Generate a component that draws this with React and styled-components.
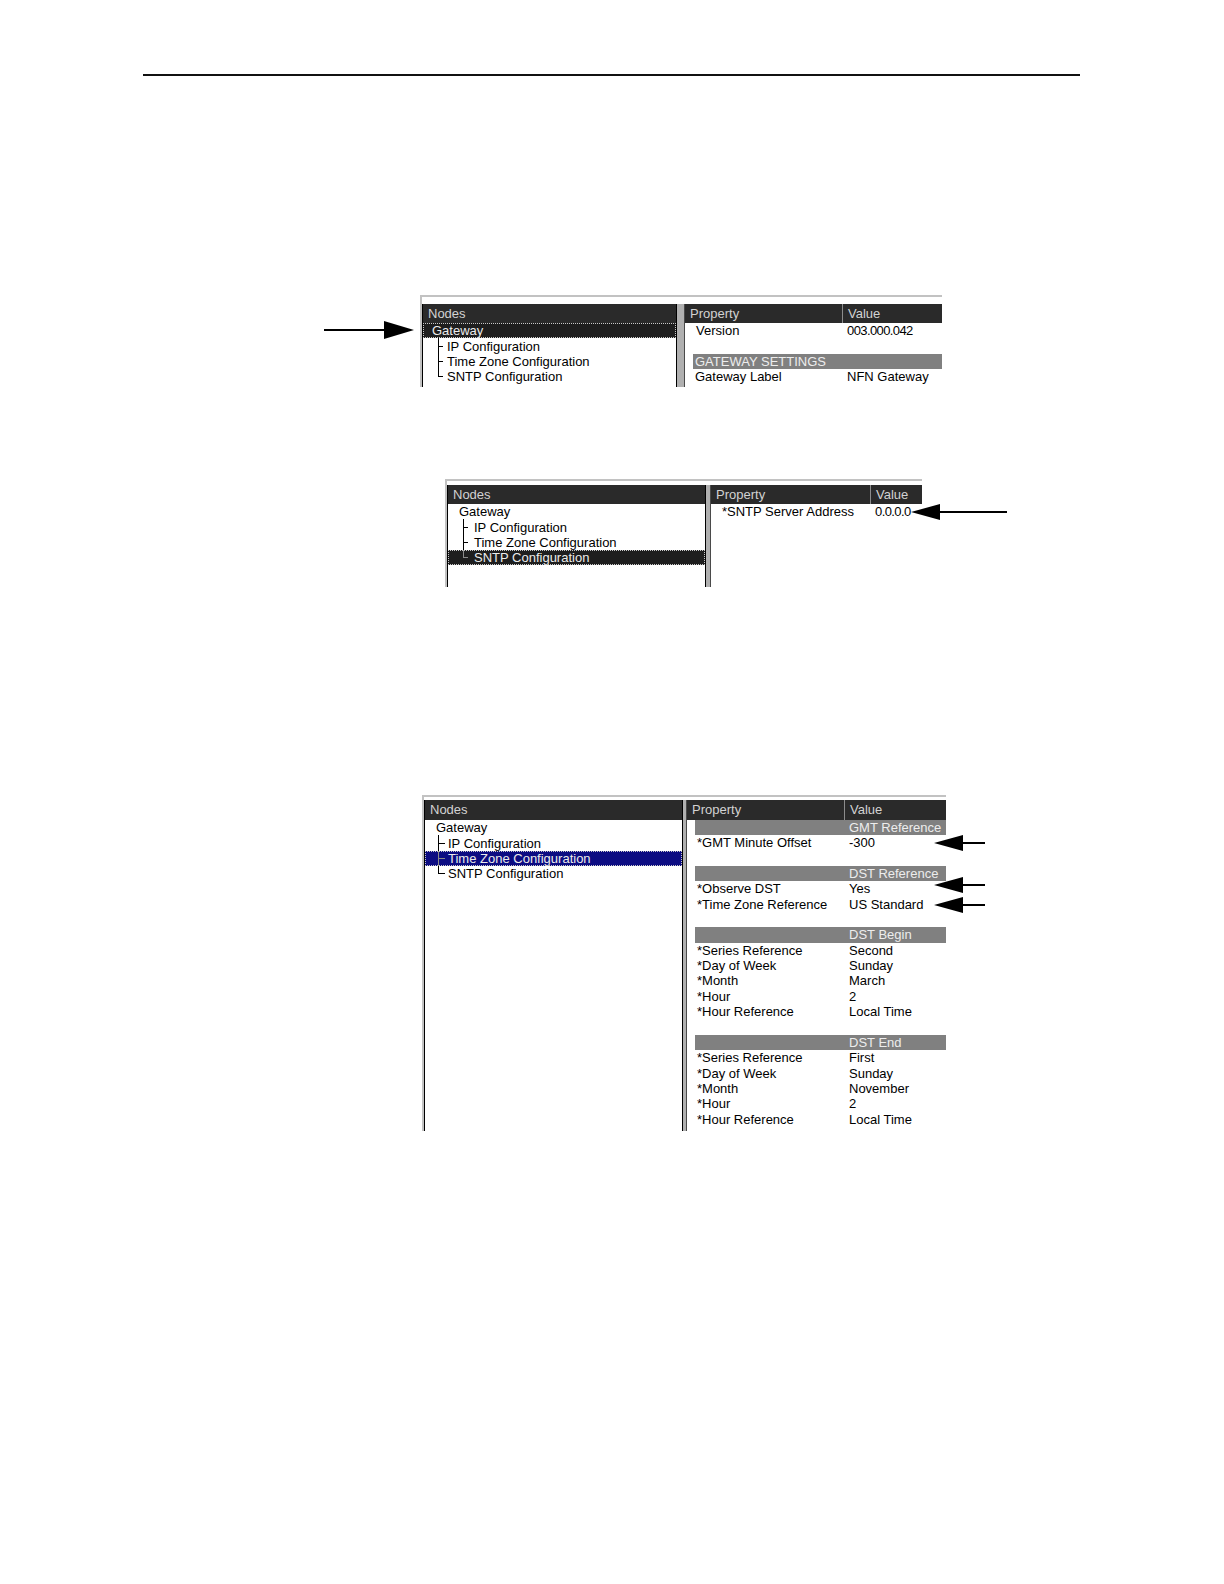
import React from 'react';
import styled, { createGlobalStyle } from 'styled-components';

const ROW = 15.35;

const GlobalStyle = createGlobalStyle`
  html, body {
    margin: 0;
    padding: 0;
    background: #fff;
  }
  body {
    font-family: "Liberation Sans", Arial, sans-serif;
  }
`;

const Page = styled.div`
  width: 1224px;
  height: 1584px;
  box-sizing: border-box;
  padding-top: 74px;
  background: #fff;
  overflow: hidden;
`;

const Rule = styled.div`
  margin-left: 143px;
  width: 937px;
  height: 2px;
  background: #111;
`;

const Figure = styled.div`
  position: relative;
  width: max-content;
  margin-top: ${p => p.$top}px;
  margin-left: ${p => p.$left}px;
`;

const Window = styled.div`
  display: flex;
  height: ${p => p.$h}px;
  box-sizing: border-box;
  padding-top: ${p => p.$gap}px;
  border-top: 2px solid #c2c2c2;
  border-left: 2px solid #c2c2c2;
  background: #fff;
  overflow: hidden;
`;

const TreePane = styled.div`
  display: flex;
  flex-direction: column;
  width: ${p => p.$w}px;
  border-left: 1px solid #000;
  border-right: 1px solid #000;
  flex-shrink: 0;
`;

const Splitter = styled.div`
  width: ${p => p.$w}px;
  background: #b0b0b0;
  border-right: 1px solid #4a4a4a;
  flex-shrink: 0;
`;

const PropPane = styled.div`
  display: flex;
  flex-direction: column;
  width: ${p => p.$w}px;
  flex-shrink: 0;
`;

const Header = styled.div`
  display: flex;
  height: ${p => p.$h}px;
  flex-shrink: 0;
  background: #2a2a2a;
  color: #d2d2d2;
  font-size: 13px;
  line-height: ${p => p.$h}px;
`;

const HeadCell = styled.div`
  box-sizing: border-box;
  padding-left: 5px;
  white-space: nowrap;
  ${p => (p.$w ? `width: ${p.$w}px; border-right: 1px solid #8c8c8c;` : 'flex: 1;')}
`;

const TreeRow = styled.div`
  display: flex;
  align-items: center;
  height: ${ROW}px;
  box-sizing: border-box;
  padding-left: ${p => p.$indent}px;
  font-size: 13px;
  white-space: nowrap;
  background: ${p => p.$sel || 'transparent'};
  color: ${p => (p.$sel ? '#ececec' : '#000')};
  outline: ${p => (p.$sel ? '1px dotted #c8c8c8' : 'none')};
  outline-offset: -1px;
`;

const Branch = styled.span`
  position: relative;
  align-self: ${p => (p.$last ? 'flex-start' : 'stretch')};
  height: ${p => (p.$last ? '50%' : 'auto')};
  width: ${p => p.$stub}px;
  margin-right: ${p => p.$gap}px;
  border-left: 1px solid ${p => p.$color};
  flex-shrink: 0;

  &::after {
    content: '';
    position: absolute;
    left: 0;
    ${p => (p.$last ? 'bottom: 0;' : 'top: 50%;')}
    width: ${p => p.$stub}px;
    border-top: 1px solid ${p => p.$color};
  }
`;

const PropRow = styled.div`
  display: grid;
  grid-template-columns: ${p => p.$col}px 1fr;
  height: ${ROW}px;
  font-size: 13px;
  line-height: ${ROW}px;
  color: #000;
  white-space: nowrap;
`;

const PropName = styled.div`
  padding-left: ${p => p.$pad}px;
  overflow: hidden;
`;

const PropValue = styled.div`
  padding-left: 4px;
  overflow: hidden;
  letter-spacing: ${p => (p.$tight ? '-0.6px' : 'normal')};
`;

const Band = styled.div`
  display: grid;
  grid-template-columns: ${p => p.$col - 8}px 1fr;
  height: ${ROW}px;
  margin-left: 8px;
  background: #808080;
  color: #ededed;
  font-size: 13px;
  line-height: ${ROW}px;
  white-space: nowrap;
`;

const BandLabel = styled.div`
  grid-column: ${p => (p.$inValue ? 2 : 1)};
  padding-left: ${p => (p.$inValue ? 4 : 2)}px;
`;

const ArrowSvg = styled.svg`
  position: absolute;
  left: ${p => p.$x}px;
  top: ${p => p.$y}px;
  overflow: visible;
`;

function Arrow({ x, y, len, dir, h = 16, head = 29 }) {
  const mid = h / 2;
  return (
    <ArrowSvg $x={x} $y={y - mid} width={len} height={h} viewBox={`0 0 ${len} ${h}`}>
      {dir === 'right' ? (
        <>
          <rect x="0" y={mid - 1} width={len - head + 2} height="2" fill="#000" />
          <polygon points={`${len - head},0 ${len},${mid} ${len - head},${h}`} fill="#000" />
        </>
      ) : (
        <>
          <rect x={head - 2} y={mid - 1} width={len - head + 2} height="2" fill="#000" />
          <polygon points={`${head},0 0,${mid} ${head},${h}`} fill="#000" />
        </>
      )}
    </ArrowSvg>
  );
}

const TREE = ['Gateway', 'IP Configuration', 'Time Zone Configuration', 'SNTP Configuration'];

function Tree({ width, head, selected, selColor, rootIndent, indent, stub, gap, extra = 0 }) {
  return (
    <TreePane $w={width}>
      <Header $h={head}>
        <HeadCell>Nodes</HeadCell>
      </Header>
      {TREE.map((label, i) => {
        const sel = i === selected ? selColor : null;
        return (
          <TreeRow key={label} $indent={i === 0 ? rootIndent : indent} $sel={sel}>
            {i > 0 && (
              <Branch
                $last={i === TREE.length - 1}
                $stub={stub}
                $gap={gap}
                $color={sel ? '#8a8a8a' : '#000'}
              />
            )}
            {label}
          </TreeRow>
        );
      })}
      {Array.from({ length: extra }).map((_, i) => (
        <TreeRow key={`e${i}`} $indent={rootIndent} />
      ))}
    </TreePane>
  );
}

function Props({ width, head, col, rows, namePad = 10 }) {
  return (
    <PropPane $w={width}>
      <Header $h={head}>
        <HeadCell $w={col}>Property</HeadCell>
        <HeadCell>Value</HeadCell>
      </Header>
      {rows.map((r, i) => {
        if (r.band) {
          return (
            <Band key={i} $col={col}>
              <BandLabel $inValue={r.inValue}>{r.band}</BandLabel>
            </Band>
          );
        }
        return (
          <PropRow key={i} $col={col}>
            <PropName $pad={r.pad || namePad}>{r.name}</PropName>
            <PropValue $tight={/\d\./.test(r.value)}>{r.value}</PropValue>
          </PropRow>
        );
      })}
    </PropPane>
  );
}

const gatewayRows = [
  { name: 'Version', value: '003.000.042', pad: 11 },
  { name: '', value: '' },
  { band: 'GATEWAY SETTINGS' },
  { name: 'Gateway Label', value: 'NFN Gateway' },
];

const sntpRows = [{ name: '*SNTP Server Address', value: '0.0.0.0' }];

const timeZoneRows = [
  { band: 'GMT Reference', inValue: true },
  { name: '*GMT Minute Offset', value: '-300' },
  { name: '', value: '' },
  { band: 'DST Reference', inValue: true },
  { name: '*Observe DST', value: 'Yes' },
  { name: '*Time Zone Reference', value: 'US Standard' },
  { name: '', value: '' },
  { band: 'DST Begin', inValue: true },
  { name: '*Series Reference', value: 'Second' },
  { name: '*Day of Week', value: 'Sunday' },
  { name: '*Month', value: 'March' },
  { name: '*Hour', value: '2' },
  { name: '*Hour Reference', value: 'Local Time' },
  { name: '', value: '' },
  { band: 'DST End', inValue: true },
  { name: '*Series Reference', value: 'First' },
  { name: '*Day of Week', value: 'Sunday' },
  { name: '*Month', value: 'November' },
  { name: '*Hour', value: '2' },
  { name: '*Hour Reference', value: 'Local Time' },
];

export default function App() {
  return (
    <Page>
      <GlobalStyle />
      <Rule />

      <Figure $top={219} $left={420}>
        <Window $h={92} $gap={7}>
          <Tree
            width={253}
            head={19}
            selected={0}
            selColor="#1e1e1e"
            rootIndent={9}
            indent={15}
            stub={4}
            gap={4}
          />
          <Splitter $w={7} />
          <Props width={257} head={19} col={158} rows={gatewayRows} />
        </Window>
        <Arrow x={-96} y={35} len={90} dir="right" h={18} head={30} />
      </Figure>

      <Figure $top={92} $left={445}>
        <Window $h={108} $gap={4}>
          <Tree
            width={257}
            head={19}
            selected={3}
            selColor="#1e1e1e"
            rootIndent={11}
            indent={15}
            stub={4}
            gap={6}
            extra={1}
          />
          <Splitter $w={4} />
          <Props width={211} head={19} col={160} rows={sntpRows} namePad={11} />
        </Window>
        <Arrow x={466} y={33} len={96} dir="left" />
      </Figure>

      <Figure $top={208} $left={422}>
        <Window $h={336} $gap={3}>
          <Tree
            width={257}
            head={20}
            selected={2}
            selColor="#0c0c82"
            rootIndent={11}
            indent={13}
            stub={6}
            gap={3}
            extra={16}
          />
          <Splitter $w={3} />
          <Props width={259} head={20} col={158} rows={timeZoneRows} />
        </Window>
        <Arrow x={512} y={48} len={51} dir="left" />
        <Arrow x={512} y={90} len={51} dir="left" />
        <Arrow x={512} y={110} len={51} dir="left" />
      </Figure>
    </Page>
  );
}
